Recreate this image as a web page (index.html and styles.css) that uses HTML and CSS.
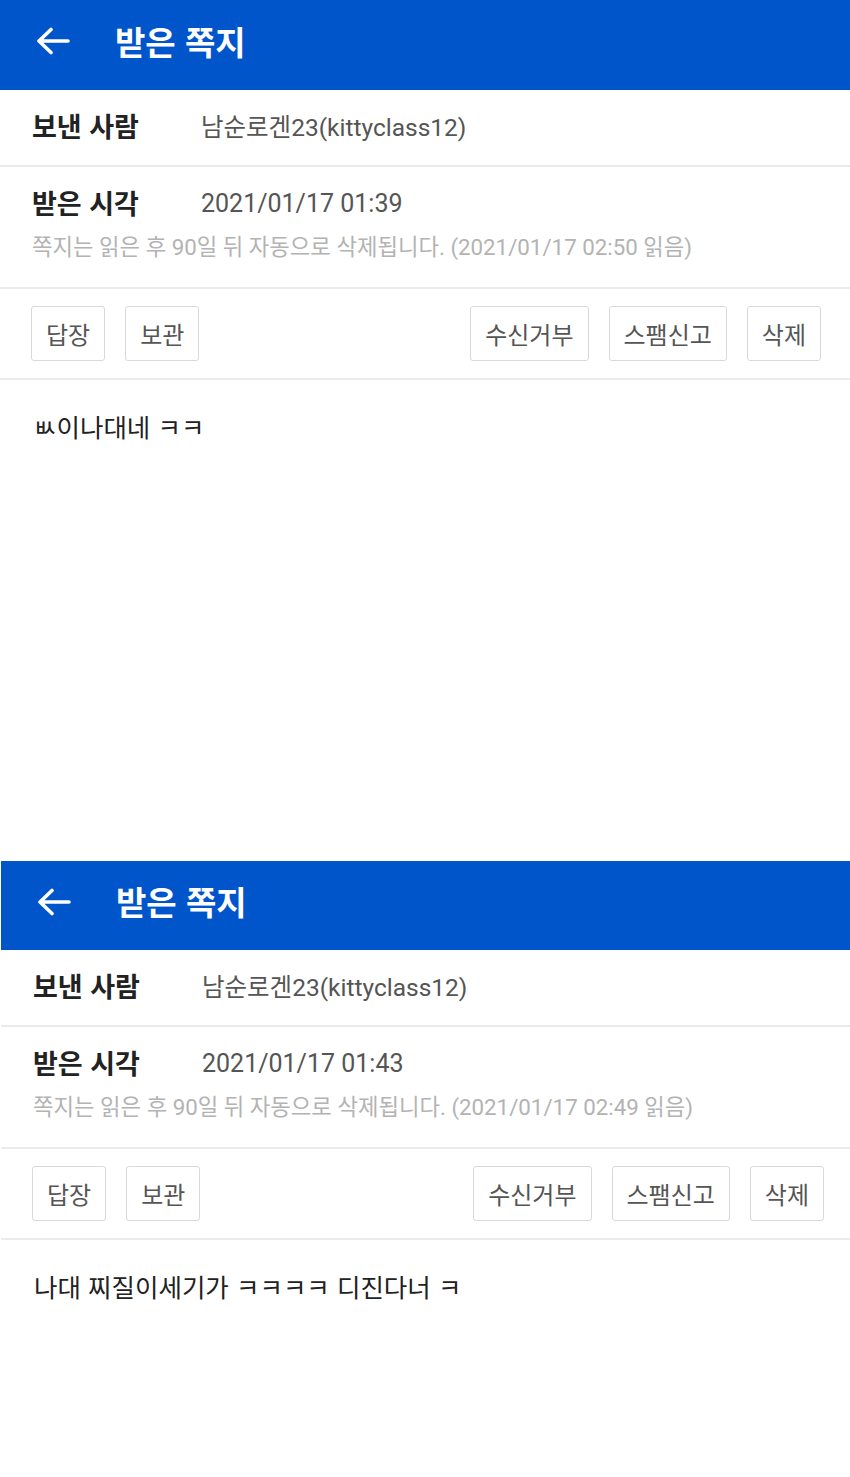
FILE: index.html
```html
<!DOCTYPE html>
<html lang="ko">
<head>
<meta charset="utf-8">
<title>받은 쪽지</title>
<link rel="stylesheet" href="styles.css">
</head>
<body>
<section class="screen screen-first">
  <header class="topbar">
    <svg class="back" viewBox="0 0 34 28" width="34" height="28" aria-hidden="true"><path d="M3 14H32M3 14L15 2.5M3 14L15 25.5" fill="none" stroke="#fff" stroke-width="3.6" stroke-linecap="round" stroke-linejoin="round"/></svg>
    <h1 class="title">받은 쪽지</h1>
  </header>
  <div class="row row-from">
    <span class="label">보낸 사람</span>
    <span class="value">남순로겐23(kittyclass12)</span>
  </div>
  <div class="row row-time">
    <div class="line">
      <span class="label">받은 시각</span>
      <span class="value">2021/01/17 01:39</span>
    </div>
    <p class="note">쪽지는 읽은 후 90일 뒤 자동으로 삭제됩니다. (2021/01/17 02:50 읽음)</p>
  </div>
  <div class="actions">
    <div class="group">
      <button class="btn">답장</button>
      <button class="btn">보관</button>
    </div>
    <div class="group">
      <button class="btn">수신거부</button>
      <button class="btn">스팸신고</button>
      <button class="btn">삭제</button>
    </div>
  </div>
  <div class="message">ㅄ이나대네 ㅋㅋ</div>
</section>
<section class="screen screen-second">
  <header class="topbar">
    <svg class="back" viewBox="0 0 34 28" width="34" height="28" aria-hidden="true"><path d="M3 14H32M3 14L15 2.5M3 14L15 25.5" fill="none" stroke="#fff" stroke-width="3.6" stroke-linecap="round" stroke-linejoin="round"/></svg>
    <h1 class="title">받은 쪽지</h1>
  </header>
  <div class="row row-from">
    <span class="label">보낸 사람</span>
    <span class="value">남순로겐23(kittyclass12)</span>
  </div>
  <div class="row row-time">
    <div class="line">
      <span class="label">받은 시각</span>
      <span class="value">2021/01/17 01:43</span>
    </div>
    <p class="note">쪽지는 읽은 후 90일 뒤 자동으로 삭제됩니다. (2021/01/17 02:49 읽음)</p>
  </div>
  <div class="actions">
    <div class="group">
      <button class="btn">답장</button>
      <button class="btn">보관</button>
    </div>
    <div class="group">
      <button class="btn">수신거부</button>
      <button class="btn">스팸신고</button>
      <button class="btn">삭제</button>
    </div>
  </div>
  <div class="message">나대 찌질이세기가 ㅋㅋㅋㅋ 디진다너 ㅋ</div>
</section>
</body>
</html>
```

FILE: styles.css
```css
* { box-sizing: border-box; }
html, body { margin: 0; padding: 0; background: #fff; }
body {
  width: 850px;
  font-family: Roboto, "Noto Sans CJK KR", sans-serif;
  color: #222;
}
.screen { display: flex; flex-direction: column; background: #fff; }
.screen-first { height: 861px; }
.screen-second { height: 616px; padding-left: 1px; }

.topbar {
  height: 90px;
  background: #0155cb;
  display: flex;
  align-items: center;
  padding: 0 0 8px 36px;
  flex-shrink: 0;
}
.screen-second .topbar { height: 89px; }
.back { display: block; margin-right: 45px; }
.title {
  margin: 0;
  color: #fff;
  font-family: "Noto Sans CJK KR", sans-serif;
  font-size: 33px;
  font-weight: 700;
  line-height: 1;
}

.row { border-bottom: 2px solid #ebebeb; padding-left: 32px; }
.row-from { height: 77px; display: flex; align-items: center; padding-bottom: 4px; }
.row-time { height: 122px; padding-top: 18px; }
.line { display: flex; align-items: center; height: 34px; }
.label {
  width: 169px;
  flex-shrink: 0;
  font-family: "Noto Sans CJK KR", sans-serif;
  font-weight: 700;
  font-size: 27px;
  color: #222;
}
.value { font-size: 24.5px; color: #555; }
.row-time .value { font-size: 25px; padding-top: 3px; }
.note {
  margin: 13px 0 0;
  line-height: 30px;
  font-size: 22.3px;
  color: #b3b3b3;
}

.actions {
  height: 91px;
  border-bottom: 2px solid #ebebeb;
  display: flex;
  align-items: center;
  justify-content: space-between;
  padding: 0 29px 0 31px;
  flex-shrink: 0;
}
.screen-second .actions { padding: 0 26px 0 31px; }
.group { display: flex; gap: 20px; }
.btn {
  height: 55px;
  padding: 0 14px;
  background: #fff;
  border: 1px solid #d9d9d9;
  border-radius: 3px;
  font-family: "Noto Sans CJK KR", sans-serif;
  font-size: 24px;
  color: #555;
  line-height: 1;
}

.message {
  padding: 31px 0 0 33px;
  font-family: "Noto Sans CJK KR", sans-serif;
  font-size: 25.5px;
  line-height: 30px;
  color: #222;
}
```
